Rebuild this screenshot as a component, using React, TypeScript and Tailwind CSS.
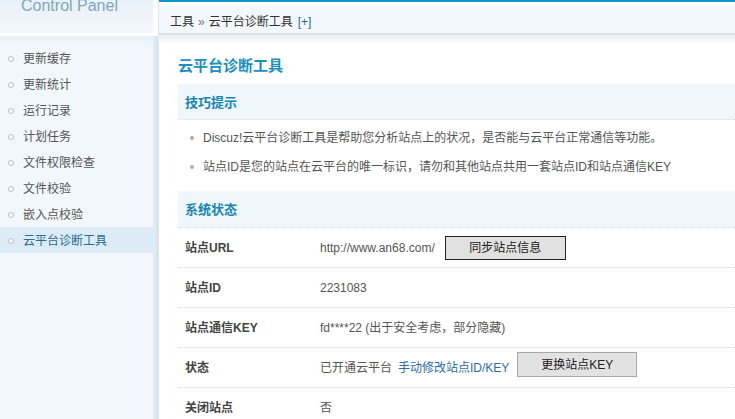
import React from "react";

const menu = [
  "更新缓存",
  "更新统计",
  "运行记录",
  "计划任务",
  "文件权限检查",
  "文件校验",
  "嵌入点校验",
  "云平台诊断工具",
];

const tips = [
  "Discuz!云平台诊断工具是帮助您分析站点上的状况，是否能与云平台正常通信等功能。",
  "站点ID是您的站点在云平台的唯一标识，请勿和其他站点共用一套站点ID和站点通信KEY",
];

function Row({ label, children, last }: { label: string; children: React.ReactNode; last?: boolean }) {
  return (
    <div
      className={`flex items-center h-[40px] shrink-0 ${
        last ? "" : "border-b border-dotted border-[#d6d6d6]"
      }`}
    >
      <div className="w-[142px] pl-[7px] font-bold text-[#444]">{label}</div>
      <div className="flex items-center text-[#555]">{children}</div>
    </div>
  );
}

export default function App() {
  return (
    <div
      className="flex w-[735px] h-[419px] overflow-hidden bg-white text-[12px]"
      style={{ fontFamily: '"Liberation Sans", Arial, "Noto Sans CJK SC", sans-serif' }}
    >
      {/* Sidebar */}
      <div className="w-[153px] shrink-0 flex flex-col bg-[#f1f7fc]">
        <div className="h-[33px] shrink-0 bg-gradient-to-b from-[#e8f1f7] to-[#f2f8fb] overflow-hidden">
          <div className="mt-[-2px] pl-[21px] text-[16px] leading-none text-[#80a6bc]">
            Control Panel
          </div>
        </div>
        <div className="h-[3px] shrink-0 bg-white" />
        <div className="h-[9px] shrink-0 bg-gradient-to-b from-[#e6f0f7] to-[#f1f7fc]" />
        <ul>
          {menu.map((m, i) => {
            const active = i === menu.length - 1;
            return (
              <li
                key={m}
                className={`flex items-center h-[26px] pt-[2px] ${active ? "bg-[#dcebf6]" : ""}`}
              >
                <span className="ml-[8px] mr-[9px] w-[6px] h-[6px] rounded-full border border-[#bbbbbb] bg-white" />
                <span className={active ? "text-[#2a6c9a]" : "text-[#555]"}>{m}</span>
              </li>
            );
          })}
        </ul>
      </div>

      {/* Divider strip */}
      <div className="w-[5px] shrink-0 flex flex-col">
        <div className="h-[36px] shrink-0 bg-white" />
        <div className="flex-1 bg-gradient-to-r from-[#e2eef6] to-[#d3e4f0]" />
      </div>

      {/* Main */}
      <div className="flex-1 flex flex-col min-w-0 overflow-hidden border-l border-[#dde6ec]">
        <div className="h-[2px] shrink-0 bg-[#0c96c8]" />
        <div className="h-[5px] shrink-0 bg-white" />
        <div className="h-[26px] shrink-0 flex items-center pt-[3px] pl-[11px] bg-[#f1f7fb] text-[#333]">
          <span>工具</span>
          <span className="mx-[4px] text-[#777]">»</span>
          <span>云平台诊断工具</span>
          <span className="ml-[5px] text-[#2a6ca8]">[+]</span>
        </div>
        <div className="h-[2px] shrink-0 bg-[#d9e1e6]" />
        <div className="h-[9px] shrink-0 bg-gradient-to-b from-[#e6f0f6] to-white" />

        <div className="shrink-0 flex flex-col pl-[19px] pt-[12px]">
          <h1 className="h-[20px] leading-[20px] text-[15px] font-bold text-[#1a8fc2]">
            云平台诊断工具
          </h1>

          <div className="mt-[8px] h-[36px] flex items-center pt-[3px] pl-[7px] bg-[#f0f7fc] border-b border-dotted border-[#d6dde2] text-[13px] font-bold text-[#1686b4]">
            技巧提示
          </div>
          <ul className="pt-[3px]">
            {tips.map((t) => (
              <li key={t} className="flex items-center h-[29px] text-[#555] whitespace-nowrap">
                <span className="ml-[12px] mr-[9px] w-[4px] h-[4px] rounded-full bg-[#aaaaaa]" />
                {t}
              </li>
            ))}
          </ul>

          <div className="mt-[10px] h-[37px] flex items-center pt-[2px] pl-[7px] bg-[#f0f7fc] border-b border-dotted border-[#d6dde2] text-[13px] font-bold text-[#1686b4]">
            系统状态
          </div>

          <Row label="站点URL">
            <span>http://www.an68.com/</span>
            <button className="ml-[10px] w-[121px] h-[24px] bg-[#e1e1e1] border border-[#222] text-[#222]">
              同步站点信息
            </button>
          </Row>
          <Row label="站点ID">
            <span>2231083</span>
          </Row>
          <Row label="站点通信KEY">
            <span>fd****22 (出于安全考虑，部分隐藏)</span>
          </Row>
          <Row label="状态">
            <span>已开通云平台</span>
            <span className="ml-[6px] text-[#2a6ca8]">手动修改站点ID/KEY</span>
            <button className="ml-[8px] mb-[6px] w-[120px] h-[25px] bg-[#e2e2e2] border border-[#a8a8a8] text-[#222]">
              更换站点KEY
            </button>
          </Row>
          <Row label="关闭站点" last>
            <span>否</span>
          </Row>
        </div>
      </div>
    </div>
  );
}
